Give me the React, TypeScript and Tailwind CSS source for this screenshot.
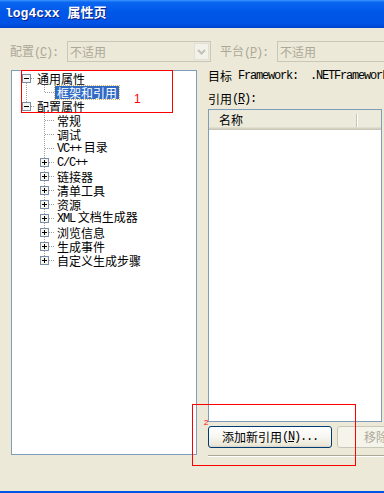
import React from 'react';

const DOT = '#a0a0a0';

function V(x: number, y1: number, y2: number) {
  return <line key={`v${x}-${y1}`} x1={x + 0.5} y1={y1} x2={x + 0.5} y2={y2} stroke={DOT} strokeDasharray="1 1" />;
}

function H(y: number, x1: number, x2: number) {
  return <line key={`h${y}-${x1}`} x1={x1} y1={y + 0.5} x2={x2} y2={y + 0.5} stroke={DOT} strokeDasharray="1 1" />;
}

function Box(cx: number, plus: boolean) {
  return (
    <g key={`b${cx}`}>
      <rect x={cx - 4 + 0.5} y={3.5} width={8} height={8} fill="#f6f5f0" stroke="#7b8ea9" />
      <rect x={cx - 2} y={7} width={5} height={1} fill="#000" />
      {plus && <rect x={cx} y={5} width={1} height={5} fill="#000" />}
    </g>
  );
}

function Lat({ children }: { children: React.ReactNode }) {
  return <span className="font-['Liberation_Mono',monospace] text-[12px] tracking-[-1.2px]">{children}</span>;
}

function TreeRow({
  w,
  parts,
  children,
  selected,
}: {
  w: number;
  parts: React.ReactNode;
  children: React.ReactNode;
  selected?: boolean;
}) {
  return (
    <div className="flex h-[14px] items-center whitespace-nowrap">
      <svg width={w} height={14} className="shrink-0" shapeRendering="crispEdges">
        {parts}
      </svg>
      <span
        className={
          selected
            ? 'px-[2px] leading-[13px] bg-[#316ac5] text-white outline-1 outline-dotted outline-[#d9b46a]'
            : 'px-[2px] leading-[13px]'
        }
      >
        {children}
      </span>
    </div>
  );
}

function Chevron() {
  return (
    <svg width="9" height="6" viewBox="0 0 9 6">
      <path d="M1 1 L4.5 4.5 L8 1" fill="none" stroke="#c4c2b6" strokeWidth="2" />
    </svg>
  );
}

export default function App() {
  const children = [
    { text: '常规', plus: false },
    { text: '调试', plus: false },
    { text: <><Lat>VC++</Lat> 目录</>, plus: false },
    { text: <Lat>C/C++</Lat>, plus: true },
    { text: '链接器', plus: true },
    { text: '清单工具', plus: true },
    { text: '资源', plus: true },
    { text: <><Lat>XML</Lat> 文档生成器</>, plus: true },
    { text: '浏览信息', plus: true },
    { text: '生成事件', plus: true },
    { text: '自定义生成步骤', plus: true },
  ];

  return (
    <div className="relative w-[384px] h-[493px] overflow-hidden bg-[#ece9d8] flex flex-col text-[12px] text-black font-['Noto_Sans_CJK_SC',sans-serif]">
      {/* title bar */}
      <div className="h-[28px] shrink-0 flex items-center pl-[5px] bg-[linear-gradient(180deg,#3d95ff_0%,#0a66f0_8%,#0058e8_40%,#0052e4_85%,#0042cc_100%)]">
        <span className="font-['Liberation_Mono','Noto_Sans_CJK_SC',monospace] font-bold text-[13px] text-white [text-shadow:1px_1px_#0a1e8a] whitespace-pre">
          log4cxx 属性页
        </span>
      </div>

      {/* configuration / platform */}
      <div className="mt-[13px] h-[21px] shrink-0 flex items-center pl-[10px] text-[#aca899] whitespace-nowrap">
        <div className="w-[57px] shrink-0">
          配置<Lat>(<span className="underline">C</span>):</Lat>
        </div>
        <div className="w-[144px] h-[21px] shrink-0 border border-[#c9c7ba] flex items-center">
          <span className="pl-[2px]">不适用</span>
          <div className="ml-auto mr-[1px] w-[15px] h-[17px] border border-[#e2e0d6] bg-[#f2f1ea] flex items-center justify-center">
            <Chevron />
          </div>
        </div>
        <div className="ml-[9px] w-[57px] shrink-0">
          平台<Lat>(<span className="underline">P</span>):</Lat>
        </div>
        <div className="w-[120px] h-[21px] border border-[#c9c7ba] flex items-center shrink-0">
          <span className="pl-[2px]">不适用</span>
        </div>
      </div>

      {/* main area */}
      <div className="mt-[7px] flex pl-[11px] items-start">
        <div className="mt-[1px] w-[186px] h-[385px] shrink-0 border border-[#7f9db9] bg-white flex flex-col">
          <TreeRow w={23} parts={<>{Box(14, false)}{H(7, 19, 23)}{V(14, 12, 14)}</>}>
            通用属性
          </TreeRow>
          <TreeRow w={43} selected parts={<>{V(14, 0, 14)}{V(32, 0, 7)}{H(7, 33, 43)}</>}>
            框架和引用
          </TreeRow>
          <TreeRow w={23} parts={<>{V(14, 0, 3)}{Box(14, false)}{H(7, 19, 23)}</>}>
            配置属性
          </TreeRow>
          {children.map((c, i) => {
            const last = i === children.length - 1;
            return (
              <TreeRow
                key={i}
                w={43}
                parts={
                  <>
                    {V(32, 0, last ? 7 : 14)}
                    {c.plus ? (
                      <>
                        {Box(32, true)}
                        {H(7, 37, 43)}
                      </>
                    ) : (
                      H(7, 33, 43)
                    )}
                  </>
                }
              >
                {c.text}
              </TreeRow>
            );
          })}
        </div>

        <div className="ml-[11px] flex flex-col w-[176px] shrink-0">
          <div className="h-[14px] flex items-center whitespace-pre">
            目标<Lat> Framework:  .NETFramework,Version=v4.0</Lat>
          </div>
          <div className="mt-[9px] h-[14px] flex items-center whitespace-nowrap">
            引用<Lat>(<span className="underline">R</span>):</Lat>
          </div>
          <div className="mt-[3px] w-[174px] h-[313px] border border-[#7f9db9] bg-white">
            <div className="h-[20px] flex items-center bg-[#ebeadb] shadow-[inset_0_-1px_#cbc7b8,inset_0_-2px_#d6d2c2,inset_0_-3px_#e2decd]">
              <span className="pl-[10px]">名称</span>
              <div className="ml-auto mr-[23px] h-[13px] w-[2px] border-l border-[#c7c5b2] bg-white" />
            </div>
          </div>
          <div className="mt-[4px] flex items-center whitespace-nowrap">
            <div className="w-[124px] h-[22px] shrink-0 rounded-[3px] border border-[#003c74] bg-[linear-gradient(180deg,#ffffff_0%,#f7f6f1_50%,#ece9d8_90%,#d6d0c5_100%)] flex items-center justify-center">
              添加新引用<Lat>(<span className="underline">N</span>)...</Lat>
            </div>
            <div className="ml-[5px] w-[80px] h-[22px] shrink-0 rounded-[3px] border border-[#c9c7ba] bg-[#f5f4ea] flex items-center pl-[26px] text-[#aca899]">
              移除<Lat>(M)</Lat>
            </div>
          </div>
          <div className="mt-[7px] w-[180px] h-[2px] border-t border-[#aca899] bg-white" />
        </div>
      </div>

      <div className="mt-auto h-[2px] shrink-0 bg-[#0054e3]" />

      {/* annotations */}
      <div className="absolute left-[21px] top-[70px] w-[152px] h-[43px] border border-[#ff0000]" />
      <div className="absolute left-[134px] top-[92px] text-[12px] leading-[14px] text-[#ff0000] font-['Liberation_Sans',sans-serif]">
        1
      </div>
      <div className="absolute left-[192px] top-[404px] w-[164px] h-[62px] border border-[#ff0000]" />
      <div className="absolute left-[204px] top-[419px] text-[8px] leading-[8px] text-[#ff0000] font-['Liberation_Sans',sans-serif]">
        2
      </div>
    </div>
  );
}
